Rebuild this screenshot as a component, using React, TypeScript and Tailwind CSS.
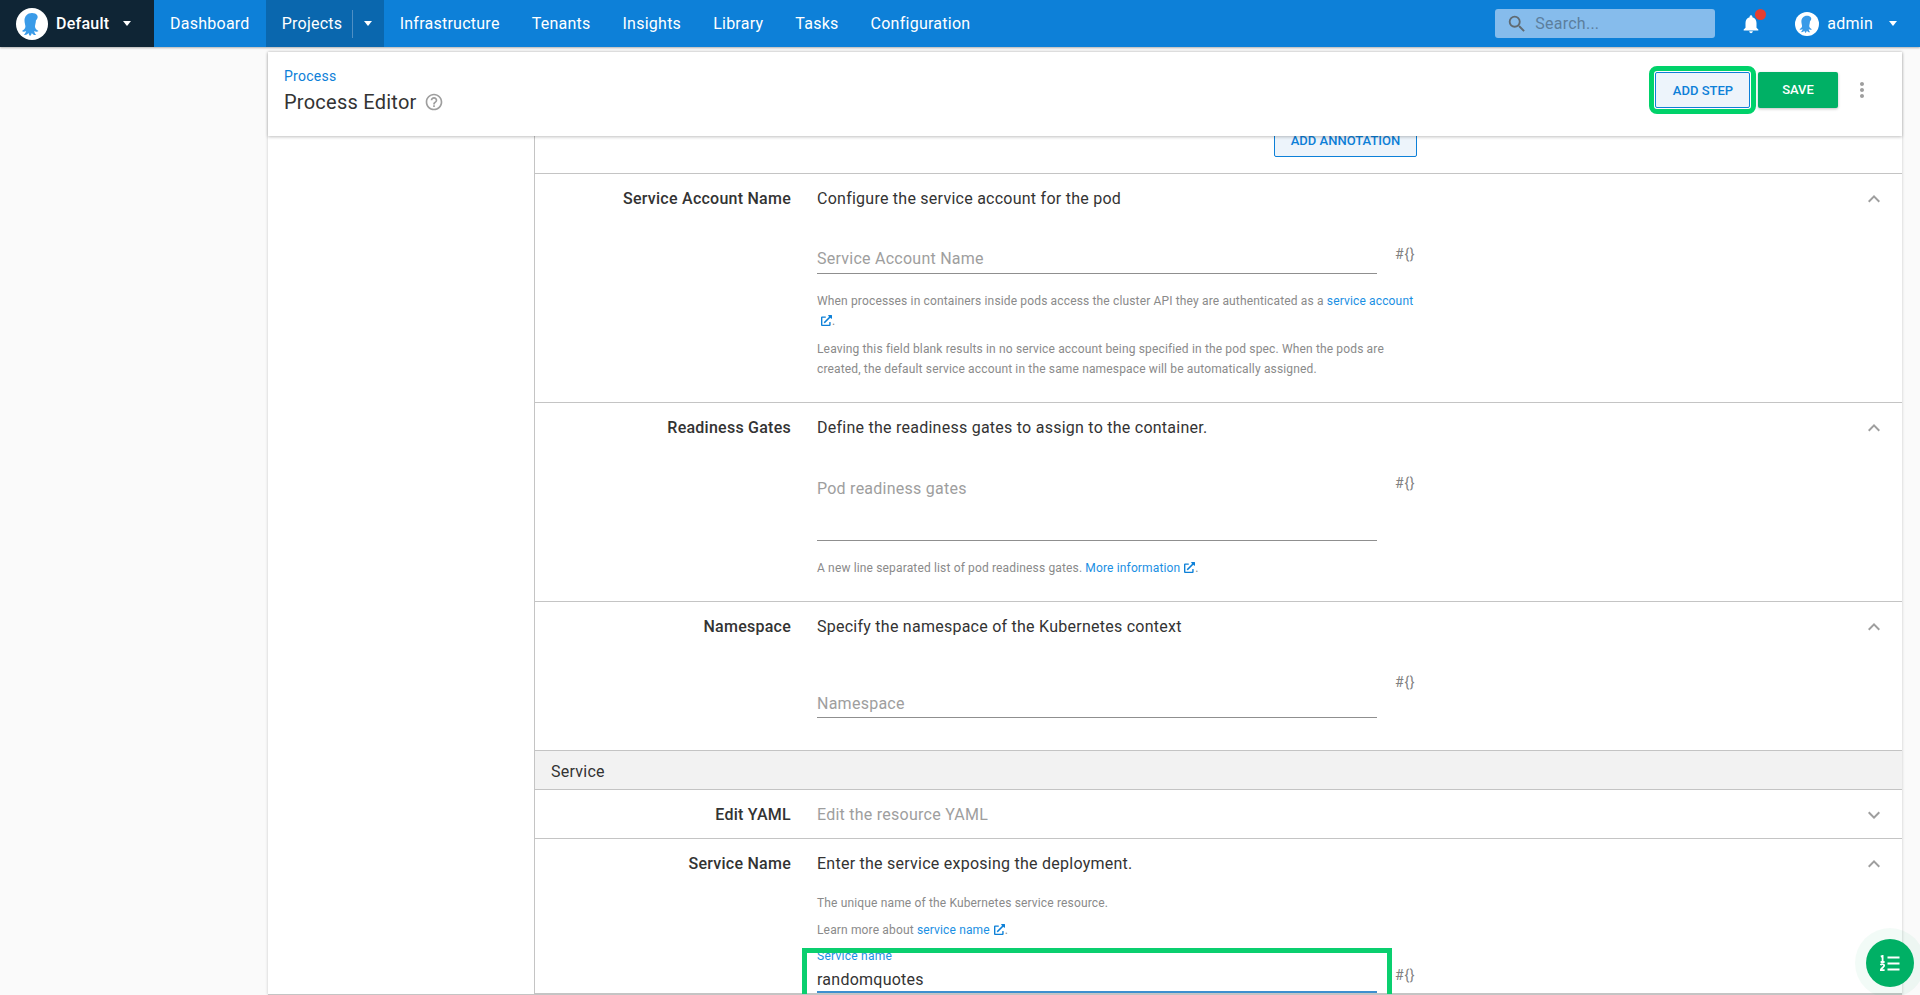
import { MdExpandLess, MdExpandMore, MdHelpOutline, MdMoreVert, MdNotifications, MdSearch } from "react-icons/md";
import { FaExternalLinkAlt } from "react-icons/fa";

function Octopus({ size }: { size: number }) {
  return (
    <svg width={size} height={size} viewBox="0 0 32 32">
      <circle cx="16" cy="16" r="16" fill="#fff" />
      <path
        d="M16 5c-4.600 0-7.500 3.400-7.500 7.600 0 2.400.9 4.200.9 6 0 2-1.300 3.200-3.400 4.400.7 1 2.800.9 4.200.1-.3 1.500-1.200 2.900-2.300 3.700 1.500.5 3.600-.3 4.600-1.800.3 1.300.7 2.200 1.500 3 1-.7 1.500-1.700 1.800-3 .8 1.500 2.800 2.500 4.300 1.900-1-.9-1.700-2.300-1.900-3.800 1.400.8 3.400.9 4.300-.2-2.200-1.100-3.500-2.400-3.500-4.300 0-1.800.9-3.600.9-6C23.900 8.400 20.600 5 16 5z"
        fill="#3a9be8"
      />
    </svg>
  );
}

function StepsIcon() {
  return (
    <svg width="20" height="16" viewBox="0 0 20 16" fill="none" stroke="#fff">
      <path d="M7.500 2.500h12M7.500 8.500h12M7.500 14.500h12" strokeWidth="2" />
      <path d="M.8 1.600 2.600.9v6M.6 7h4" strokeWidth="1.800" />
      <path d="M.7 10.200c.4-1.400 3.500-1.400 3.500.4 0 1.500-3.400 2.800-3.400 4.500h3.800" strokeWidth="1.800" />
    </svg>
  );
}

function Caret() {
  return <span className="w-0 h-0 border-x-[4.500px] border-x-transparent border-t-[5px] border-t-white" />;
}

function ExtLink() {
  return <FaExternalLinkAlt className="inline-block ml-[4px] mb-[2px] text-[11px] text-[#0d80d8]" />;
}

function Variable({ className = "" }: { className?: string }) {
  return <span className={"text-[14px] text-[#808080] leading-none tracking-[0.75px] whitespace-nowrap " + className}>#{"{}"}</span>;
}

function Row({
  label,
  summary,
  muted,
  open = true,
  className = "",
  children,
}: {
  label: string;
  summary: string;
  muted?: boolean;
  open?: boolean;
  className?: string;
  children?: React.ReactNode;
}) {
  return (
    <div className={"flex border-b border-[#c4c4c4] shrink-0 " + className}>
      <div className="w-[256px] shrink-0 pt-[13px] text-right text-[16px] leading-[24px] font-medium text-[#333333]">{label}</div>
      <div className="ml-[26px] w-[560px] shrink-0 pt-[13px]">
        <div className={"text-[16px] leading-[24px] " + (muted ? "text-[#9e9e9e]" : "text-[#333333]")}>{summary}</div>
        {children}
      </div>
      <div className="ml-auto mr-[16px] w-[24px] pt-[13px] text-[#9e9e9e]">
        {open ? <MdExpandLess size={24} /> : <MdExpandMore size={24} />}
      </div>
    </div>
  );
}

function Field({ placeholder, className = "" }: { placeholder: string; className?: string }) {
  return (
    <div className={"w-[560px] border-b border-[#8f8f8f] text-[16px] leading-[24px] text-[#9e9e9e] " + className}>{placeholder}</div>
  );
}

const help = "text-[12px] leading-[20px] text-[#8a8a8a] tracking-[0.15px]";
const btn = "text-[13px] font-medium tracking-normal";

export default function App() {
  return (
    <div className="h-[995px] w-[1920px] overflow-hidden flex flex-col bg-[#fafafa] tracking-[0.25px] font-[family-name:Roboto,sans-serif]">
      <nav className="h-[47px] shrink-0 flex items-center bg-[#0d80d8] text-white text-[16px] shadow-[0_1px_2px_rgba(0,0,0,0.3)] z-20">
        <div className="w-[154px] h-full flex items-center pl-[16px] bg-[#0f2535]">
          <Octopus size={32} />
          <span className="ml-[8px] font-medium">Default</span>
          <span className="ml-[14px] flex"><Caret /></span>
        </div>
        <div className="flex h-full items-center">
          <a className="pl-[16px] pr-[16px]">Dashboard</a>
          <div className="h-full w-[118px] flex items-center pl-[16px] bg-[#0a67ae]">
            <span>Projects</span>
            <span className="ml-[10px] h-[28px] border-l border-[#4f8fc4]" />
            <span className="ml-[11px] flex"><Caret /></span>
          </div>
          <a className="px-[16px]">Infrastructure</a>
          <a className="px-[16px]">Tenants</a>
          <a className="px-[16px]">Insights</a>
          <a className="px-[16px]">Library</a>
          <a className="px-[16px]">Tasks</a>
          <a className="px-[16px]">Configuration</a>
        </div>
        <div className="ml-auto flex items-center h-full">
          <div className="w-[220px] h-[29px] rounded-[3px] bg-[#86bcec] flex items-center pl-[13px] text-[#5c7f9e]">
            <MdSearch size={22} className="text-[#5f6a72] -ml-[2px]" />
            <span className="ml-[7px]">Search...</span>
          </div>
          <div className="relative ml-[25px] w-[22px] flex justify-center">
            <MdNotifications size={24} />
            <span className="absolute -top-[3px] right-[-4px] w-[11px] h-[11px] rounded-full bg-[#e53e30]" />
          </div>
          <div className="ml-[33px]"><Octopus size={24} /></div>
          <span className="ml-[8px] text-[16px]">admin</span>
          <span className="ml-[16px] mr-[23px] flex"><Caret /></span>
        </div>
      </nav>

      <div className="flex-1 flex min-h-0">
        <div className="w-[268px] shrink-0" />
        <main className="relative w-[1634px] shrink-0 bg-white flex flex-col mt-[5px] shadow-[0_0_3px_rgba(0,0,0,0.2)] border-b border-[#c4c4c4]">
          <header className="h-[84px] shrink-0 flex justify-between pl-[16px] shadow-[0_1px_3px_rgba(0,0,0,0.25)] z-10 bg-white">
            <div className="pt-[14px]">
              <a className="block text-[14px] leading-[20px] text-[#0d80d8]">Process</a>
              <div className="flex items-center mt-[2px] text-[20px] leading-[28px] text-[#333333]">
                Process Editor
                <MdHelpOutline size={20} className="ml-[7px] text-[#9e9e9e]" />
              </div>
            </div>
            <div className="flex items-start pt-[20px]">
              <div className="p-[1px] -mt-[6px] border-[5px] border-[#00d26a] rounded-[8px]">
                <button className={"block w-[95px] h-[36px] pt-[1px] pl-[1px] rounded-[2px] bg-[#edf4fb] border border-[#0d80d8] text-[#0d80d8] " + btn}>ADD STEP</button>
              </div>
              <button className={"ml-[2px] w-[80px] h-[36px] rounded-[2px] bg-[#00b065] text-white shadow-[0_1px_3px_rgba(0,0,0,0.25)] " + btn}>SAVE</button>
              <MdMoreVert size={24} className="ml-[12px] mt-[6px] mr-[28px] text-[#9e9e9e]" />
            </div>
          </header>

          <div className="flex-1 flex min-h-0 overflow-hidden">
            <div className="w-[267px] shrink-0 border-r border-[#c4c4c4]" />
            <div className="flex-1 flex flex-col min-w-0">
              <div className="h-[38px] shrink-0 border-b border-[#c4c4c4] flex items-end pb-[16px] overflow-hidden">
                <div className={"ml-[739px] shrink-0 w-[143px] h-[36px] pt-[4px] flex items-center justify-center rounded-[2px] bg-[#edf4fb] border border-[#0d80d8] text-[#0d80d8] " + btn}>ADD ANNOTATION</div>
              </div>
              <Row label="Service Account Name" summary="Configure the service account for the pod" className="h-[229px]">
                <div className="relative mt-[35px]">
                  <Field placeholder="Service Account Name" className="pt-[1px] pb-[2px]" />
                  <Variable className="absolute left-[578px] top-[1px]" />
                </div>
                <div className={"mt-[17px] w-[600px] " + help}>
                  When processes in containers inside pods access the cluster API they are authenticated as a <a className="text-[#1a8fe3]">service account</a>
                  <br />
                  <ExtLink />.
                </div>
                <div className={"mt-[8px] w-[570px] " + help}>
                  Leaving this field blank results in no service account being specified in the pod spec. When the pods are created, the default service account in the same namespace will be automatically assigned.
                </div>
              </Row>
              <Row label="Readiness Gates" summary="Define the readiness gates to assign to the container." className="h-[199px]">
                <div className="relative mt-[35px]">
                  <Field placeholder="Pod readiness gates" className="h-[66px] pt-[2px]" />
                  <Variable className="absolute left-[578px] top-[1px]" />
                </div>
                <div className={"mt-[17px] " + help}>
                  A new line separated list of pod readiness gates. <a className="text-[#1a8fe3]">More information</a><ExtLink />.
                </div>
              </Row>
              <Row label="Namespace" summary="Specify the namespace of the Kubernetes context" className="h-[149px]">
                <div className="relative mt-[51px]">
                  <Field placeholder="Namespace" className="pt-[2px] pb-[1px]" />
                  <Variable className="absolute left-[578px] -top-[15px]" />
                </div>
              </Row>
              <div className="h-[39px] shrink-0 flex items-center pl-[16px] pt-[3px] bg-[#f2f2f2] border-b border-[#c4c4c4] text-[16px] text-[#333333]">Service</div>
              <Row label="Edit YAML" summary="Edit the resource YAML" muted open={false} className="h-[49px]" />
              <Row label="Service Name" summary="Enter the service exposing the deployment." className="flex-1 min-h-0">
                <div className={"mt-[17px] " + help}>The unique name of the Kubernetes service resource.</div>
                <div className={"mt-[7px] " + help}>
                  Learn more about <a className="text-[#1a8fe3]">service name</a><ExtLink />.
                </div>
                <div className="relative mt-[8px]">
                  <div className="-mx-[15px] w-[590px] h-[60px] border-[5px] border-[#0acf6f] px-[10px] overflow-hidden">
                    <div className="text-[12px] leading-[14px] text-[#1a8fe3] -mt-[4px]">Service name</div>
                    <div className="mt-[4px] pt-[1px] border-b-2 border-[#3d8fcf] text-[16px] leading-[23px] text-[#333333]">randomquotes</div>
                  </div>
                  <Variable className="absolute left-[578px] top-[20px]" />
                </div>
              </Row>
            </div>
          </div>
          <div className="absolute right-[-12px] bottom-[7px] z-10 w-[48px] h-[48px] rounded-full bg-[#00b065] flex items-center justify-center shadow-[0_0_0_11px_rgba(0,176,101,0.05)]">
            <StepsIcon />
          </div>
        </main>
      </div>
    </div>
  );
}
